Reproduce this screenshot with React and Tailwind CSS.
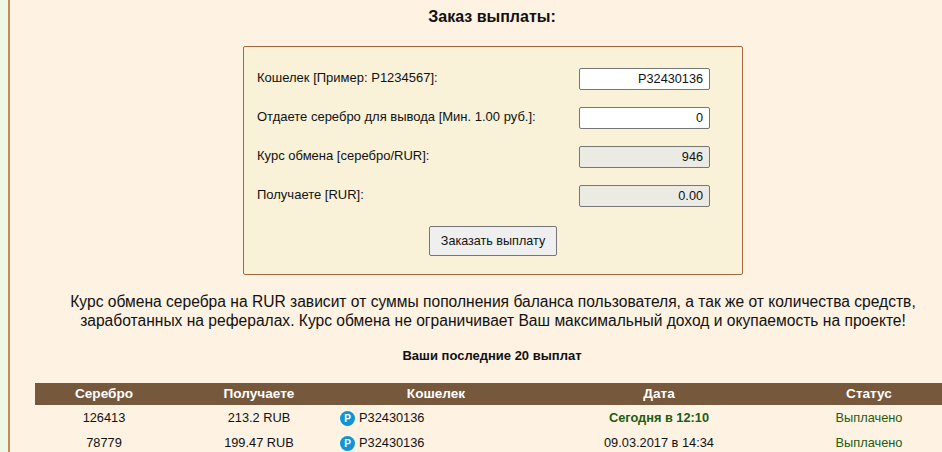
import React from 'react';

const fields = [
  { label: 'Кошелек [Пример: P1234567]:', value: 'P32430136' },
  { label: 'Отдаете серебро для вывода [Мин. 1.00 руб.]:', value: '0' },
  { label: 'Курс обмена [серебро/RUR]:', value: '946', readOnly: true },
  { label: 'Получаете [RUR]:', value: '0.00', readOnly: true },
];

const payouts = [
  { silver: '126413', rub: '213.2 RUB', wallet: 'P32430136', date: 'Сегодня в 12:10', today: true },
  { silver: '78779', rub: '199.47 RUB', wallet: 'P32430136', date: '09.03.2017 в 14:34' },
];

const cols = 'grid grid-cols-[138px_172px_182px_264px_156px] items-center';

function PayeerIcon() {
  return (
    <svg width="15" height="15" viewBox="0 0 15 15" className="shrink-0">
      <circle cx="7.5" cy="7.5" r="7.5" fill="#0f95d6" />
      <text x="7.6" y="11" textAnchor="middle" fontSize="10" fontWeight="700" fontFamily="Liberation Sans" fill="#fff">P</text>
    </svg>
  );
}

export default function App() {
  return (
    <div className="w-[942px] h-[452px] overflow-hidden flex bg-[#eef6e4] pl-2 font-['Liberation_Sans',Arial,sans-serif] text-[#111]">
      <div className="w-[966px] shrink-0 h-full border-l-2 border-[#c68a50] bg-[#fef2e3]">
        <h1 className="h-[32px] pt-[8px] text-center text-[16px] leading-[18px] font-bold">Заказ выплаты:</h1>

        <div className="mt-[14px] ml-[233px] w-[500px] h-[229px] rounded-[2px] border border-[#a5683d] bg-[#f9f1d8] pt-[21px] pl-[13px]">
          <div className="flex flex-col gap-[17px]">
            {fields.map((f) => (
              <div key={f.label} className="flex items-center justify-between w-[453px] h-[22px]">
                <span className="text-[13px] leading-[15px] -mt-[3px]">{f.label}</span>
                <input
                  readOnly
                  value={f.value}
                  className={`w-[131px] h-[22px] rounded-[2px] border border-[#767676] pl-[5px] pr-[6px] text-right text-[12.7px] outline-none ${f.readOnly ? 'bg-[#ebebe4]' : 'bg-white'}`}
                />
              </div>
            ))}
          </div>
          <button className="block mt-[19px] ml-[172px] w-[128px] h-[30px] rounded-[2px] border border-[#767676] bg-[#efefef] text-[12.6px]">
            Заказать выплату
          </button>
        </div>

        <p className="mt-[17px] ml-[10px] w-[946px] text-center text-[15.6px] leading-[19px]">
          Курс обмена серебра на RUR зависит от суммы пополнения баланса пользователя, а так же от количества средств,
          <br />
          заработанных на рефералах. Курс обмена не ограничивает Ваш максимальный доход и окупаемость на проекте!
        </p>

        <h2 className="mt-[19px] text-center text-[13px] leading-[14px] font-bold">Ваши последние 20 выплат</h2>

        <div className="mt-[20px] ml-[25px] w-[912px]">
          <div className={`${cols} h-[22px] bg-[#76583c] text-center text-[13.6px] font-bold text-white`}>
            <div>Серебро</div>
            <div>Получаете</div>
            <div>Кошелек</div>
            <div>Дата</div>
            <div>Статус</div>
          </div>
          {payouts.map((p) => (
            <div key={p.silver} className={`${cols} h-[25px] text-center text-[12.8px]`}>
              <div>{p.silver}</div>
              <div>{p.rub}</div>
              <div className="flex items-center gap-[4px] -ml-[5px] pt-[1px]">
                <PayeerIcon />
                <span>{p.wallet}</span>
              </div>
              <div className={p.today ? 'font-bold text-[#1d5c12]' : ''}>{p.date}</div>
              <div className="text-[#1d5c12]">Выплачено</div>
            </div>
          ))}
        </div>
      </div>
    </div>
  );
}
